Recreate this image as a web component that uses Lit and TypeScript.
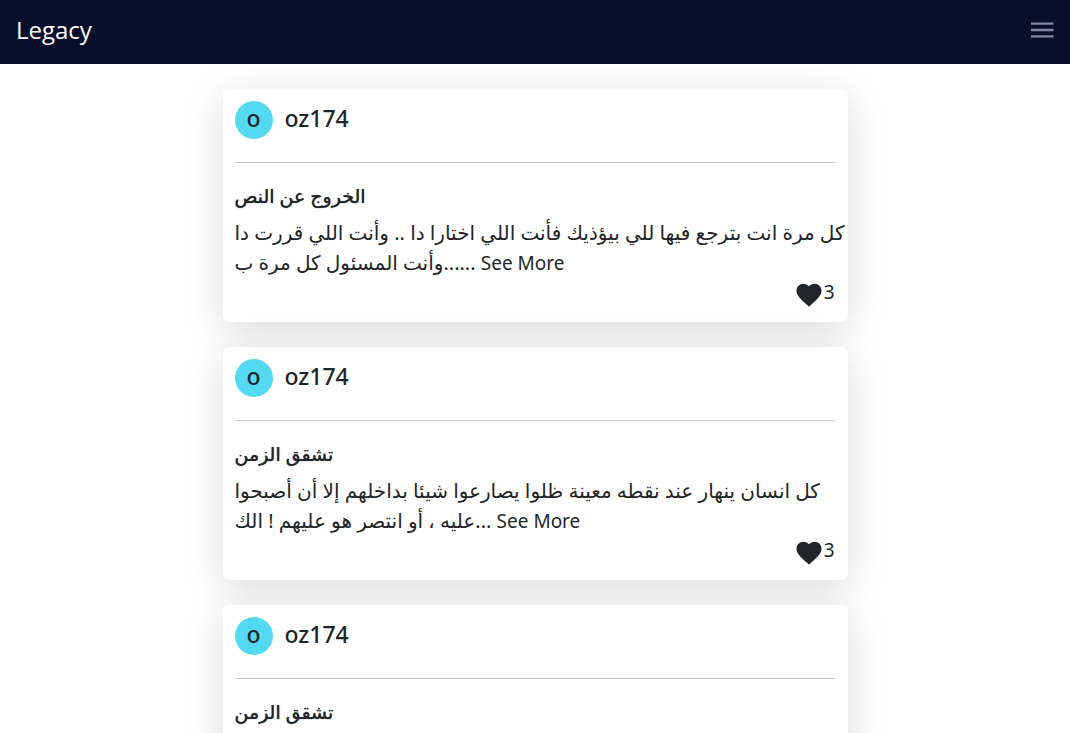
import { LitElement, html, css } from "lit";
import { customElement, property } from "lit/decorators.js";

interface Post {
  author: string;
  title: string;
  body: string[];
  likes: number;
}

const posts: Post[] = [
  {
    author: "oz174",
    title: "الخروج عن النص",
    body: [
      "كل مرة انت بترجع فيها للي بيؤذيك فأنت اللي اختارا دا .. وأنت اللي قررت دا",
      "وأنت المسئول كل مرة ب...",
    ],
    likes: 3,
  },
  {
    author: "oz174",
    title: "تشقق الزمن",
    body: [
      "كل انسان ينهار عند نقطه معينة ظلوا يصارعوا شيئا بداخلهم إلا أن أصبحوا",
      "عليه ، أو انتصر هو عليهم ! الك",
    ],
    likes: 3,
  },
  {
    author: "oz174",
    title: "تشقق الزمن",
    body: [
      "كل انسان ينهار عند نقطه معينة ظلوا يصارعوا شيئا بداخلهم إلا أن أصبحوا",
      "عليه ، أو انتصر هو عليهم ! الك",
    ],
    likes: 3,
  },
];

@customElement("post-card")
export class PostCard extends LitElement {
  @property({ attribute: false }) post!: Post;

  static styles = css`
    :host {
      display: block;
      box-sizing: border-box;
      padding: 12px 13px 12px 12px;
      border-radius: 6px;
      background: #fff;
      box-shadow: 0 8px 40px rgba(0, 0, 0, 0.14);
    }
    .author {
      display: flex;
      align-items: flex-start;
      gap: 12px;
      height: 38px;
    }
    .avatar {
      width: 38px;
      height: 38px;
      border-radius: 50%;
      background: #54d9f2;
      font-size: 23px;
      font-weight: 500;
      line-height: 34px;
      text-align: center;
    }
    .name {
      margin: 0;
      font-size: 23px;
      font-weight: 500;
      line-height: 34px;
    }
    .rule {
      height: 1px;
      margin: 23px 0 20px;
      border: 0;
      background: #c8c9ca;
    }
    .title {
      margin: 0 0 9px;
      font-size: 19px;
      font-weight: 400;
      line-height: 26px;
      text-shadow: 0 0 1px currentColor;
    }
    .body {
      margin: 0 -13px 0 0;
      font-size: 20px;
      line-height: 30px;
      white-space: pre-line;
    }
    .more {
      color: inherit;
      font-size: 19px;
      line-height: 24px;
      text-decoration: none;
    }
    .likes {
      display: flex;
      justify-content: flex-end;
      align-items: flex-start;
      height: 32px;
      font-size: 19px;
      line-height: 28px;
    }
    .like {
      display: flex;
      padding: 2px 0 0;
      border: 0;
      background: none;
      color: inherit;
    }
  `;

  render() {
    const { author, title, body, likes } = this.post;
    return html`
      <div class="author">
        <span class="avatar">${author[0]}</span>
        <h2 class="name">${author}</h2>
      </div>
      <hr class="rule" />
      <h3 class="title">${title}</h3>
      <p class="body">${body.join("\n")}... <a class="more" href="#">See More</a></p>
      <div class="likes">
        <button class="like" aria-label="Like">
          <svg width="30" height="30" viewBox="0 0 24 24" fill="currentColor">
            <path d="M12 21.35l-1.45-1.32C5.4 15.36 2 12.28 2 8.5 2 5.42 4.42 3 7.5 3c1.74 0 3.41.81 4.5 2.09C13.09 3.81 14.76 3 16.5 3 19.58 3 22 5.42 22 8.5c0 3.78-3.4 6.86-8.55 11.54L12 21.35z" />
          </svg>
        </button>
        <span>${likes}</span>
      </div>
    `;
  }
}

@customElement("app-root")
export class AppRoot extends LitElement {
  static styles = css`
    :host {
      display: block;
      height: 100vh;
      overflow: hidden;
      background: #fff;
      color: #212529;
      font-family: "Noto Sans", "DejaVu Sans", sans-serif;
    }
    .bar {
      display: flex;
      justify-content: space-between;
      align-items: center;
      box-sizing: border-box;
      height: 64px;
      padding: 0 16px 4px;
      position: relative;
      z-index: 1;
      background: #0a0e2d;
    }
    .brand {
      color: #fff;
      font-family: "Open Sans", sans-serif;
      font-size: 24px;
      line-height: 36px;
      text-decoration: none;
    }
    .menu {
      display: flex;
      padding: 0;
      border: 0;
      background: none;
      color: #84869f;
    }
    .feed {
      display: grid;
      gap: 25px;
      max-width: 625px;
      margin: 25px auto;
    }
  `;

  render() {
    return html`
      <header class="bar">
        <a class="brand" href="#">Legacy</a>
        <button class="menu" aria-label="Menu">
          <svg width="24" height="24" viewBox="0 0 24 24" fill="currentColor">
            <path d="M1 4.4h22.500v2.400H1zM1 10.800h22.500v2.400H1zM1 17.200h22.500v2.400H1z" />
          </svg>
        </button>
      </header>
      <main class="feed">
        ${posts.map((post) => html`<post-card .post=${post}></post-card>`)}
      </main>
    `;
  }
}
